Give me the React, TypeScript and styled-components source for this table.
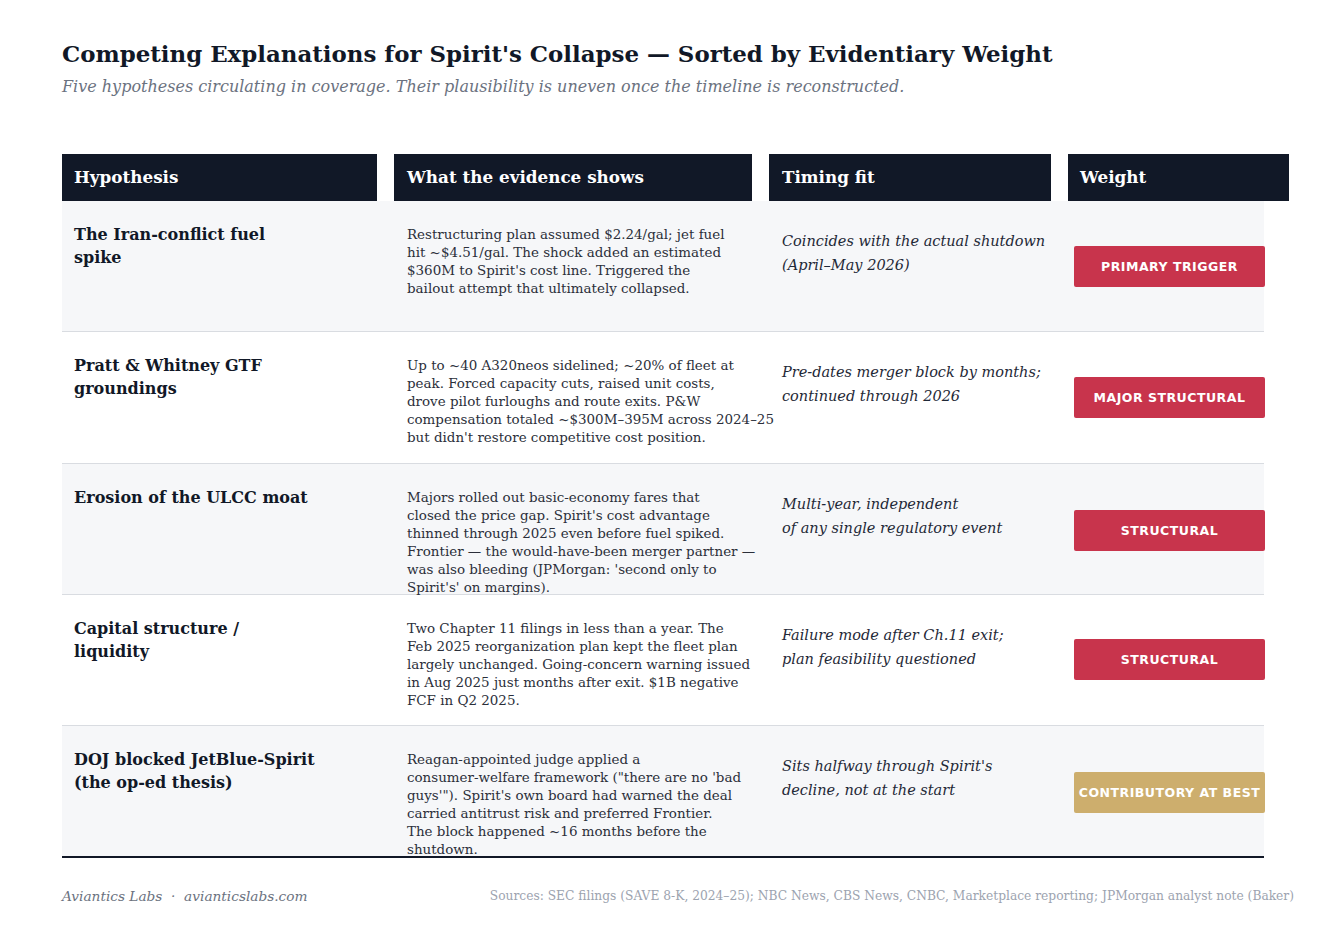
import React from "react";
import styled, { createGlobalStyle } from "styled-components";

const Global = createGlobalStyle`
  html, body { margin: 0; padding: 0; background: #ffffff; }
  body { font-family: "DejaVu Serif", serif; color: #111827; }
`;

const Page = styled.div`
  padding: 40px 0 0 62px;
  width: 1240px;
`;

const Title = styled.h1`
  margin: 0;
  font-size: 22.9px;
  line-height: 28px;
  font-weight: 700;
  color: #111827;
  white-space: nowrap;
`;

const Subtitle = styled.p`
  margin: 8px 0 0;
  font-size: 16px;
  line-height: 22px;
  font-style: italic;
  color: #6b7280;
`;

const HeaderRow = styled.div`
  margin-top: 56px;
  display: grid;
  grid-template-columns: 315px 358px 282px 221px;
  column-gap: 17px;
  width: 1227px;
`;

const HeaderCell = styled.div<{ $pad: number }>`
  background: #111827;
  color: #ffffff;
  height: 47px;
  display: flex;
  align-items: center;
  padding: 0 0 2px ${(p) => p.$pad}px;
  font-size: 16.8px;
  font-weight: 700;
  box-sizing: border-box;
`;

const Row = styled.div<{ $alt: boolean; $last: boolean }>`
  display: grid;
  grid-template-columns: 332px 375px 299px 196px;
  width: 1202px;
  height: ${(p) => (p.$last ? "132.25px" : "131.25px")};
  box-sizing: border-box;
  background: ${(p) => (p.$alt ? "#f6f7f9" : "#ffffff")};
  border-bottom: ${(p) => (p.$last ? "2px solid #111827" : "1px solid #d9dce1")};
`;

const Hypo = styled.div`
  padding: 22px 0 0 12px;
  font-size: 16px;
  line-height: 23px;
  font-weight: 700;
  color: #111827;
`;

const Evidence = styled.div`
  padding: 25px 0 0 13px;
  font-size: 13.45px;
  line-height: 18px;
  color: #2b2f3a;
`;

const Line = styled.div`
  white-space: nowrap;
`;

const Timing = styled.div`
  padding: 28px 8px 0 13px;
  font-size: 14.5px;
  line-height: 24px;
  font-style: italic;
  color: #1f2937;
`;

const WeightCell = styled.div`
  display: flex;
  align-items: center;
  padding-left: 6px;
`;

const Badge = styled.div<{ $tone: "red" | "gold" }>`
  flex: none;
  width: 191px;
  height: 41px;
  box-sizing: border-box;
  border-radius: 2px;
  display: flex;
  align-items: center;
  justify-content: center;
  background: ${(p) => (p.$tone === "red" ? "#c8344c" : "#cdae6d")};
  color: #ffffff;
  font-family: "DejaVu Sans", sans-serif;
  font-weight: 700;
  font-size: 12.5px;
  letter-spacing: 0.5px;
  text-transform: uppercase;
  white-space: nowrap;
`;

const Footer = styled.div`
  margin-top: 28px;
  width: 1232px;
  display: flex;
  justify-content: space-between;
  align-items: center;
`;

const Brand = styled.div`
  font-size: 13.7px;
  line-height: 20px;
  font-style: italic;
  color: #6b7280;
`;

const Sources = styled.div`
  font-size: 12.25px;
  line-height: 20px;
  color: #9ca3af;
  white-space: nowrap;
`;

type Item = {
  hypo: string[];
  evidence: string[];
  timing: string[];
  weight: string;
  tone: "red" | "gold";
};

const items: Item[] = [
  {
    hypo: ["The Iran-conflict fuel", "spike"],
    evidence: [
      "Restructuring plan assumed $2.24/gal; jet fuel",
      "hit ~$4.51/gal. The shock added an estimated",
      "$360M to Spirit's cost line. Triggered the",
      "bailout attempt that ultimately collapsed.",
    ],
    timing: ["Coincides with the actual shutdown", "(April–May 2026)"],
    weight: "Primary trigger",
    tone: "red",
  },
  {
    hypo: ["Pratt & Whitney GTF", "groundings"],
    evidence: [
      "Up to ~40 A320neos sidelined; ~20% of fleet at",
      "peak. Forced capacity cuts, raised unit costs,",
      "drove pilot furloughs and route exits. P&W",
      "compensation totaled ~$300M–395M across 2024–25",
      "but didn't restore competitive cost position.",
    ],
    timing: ["Pre-dates merger block by months;", "continued through 2026"],
    weight: "Major structural",
    tone: "red",
  },
  {
    hypo: ["Erosion of the ULCC moat"],
    evidence: [
      "Majors rolled out basic-economy fares that",
      "closed the price gap. Spirit's cost advantage",
      "thinned through 2025 even before fuel spiked.",
      "Frontier — the would-have-been merger partner —",
      "was also bleeding (JPMorgan: 'second only to",
      "Spirit's' on margins).",
    ],
    timing: ["Multi-year, independent", "of any single regulatory event"],
    weight: "Structural",
    tone: "red",
  },
  {
    hypo: ["Capital structure /", "liquidity"],
    evidence: [
      "Two Chapter 11 filings in less than a year. The",
      "Feb 2025 reorganization plan kept the fleet plan",
      "largely unchanged. Going-concern warning issued",
      "in Aug 2025 just months after exit. $1B negative",
      "FCF in Q2 2025.",
    ],
    timing: ["Failure mode after Ch.11 exit;", "plan feasibility questioned"],
    weight: "Structural",
    tone: "red",
  },
  {
    hypo: ["DOJ blocked JetBlue-Spirit", "(the op-ed thesis)"],
    evidence: [
      "Reagan-appointed judge applied a",
      "consumer-welfare framework (\"there are no 'bad",
      "guys'\"). Spirit's own board had warned the deal",
      "carried antitrust risk and preferred Frontier.",
      "The block happened ~16 months before the",
      "shutdown.",
    ],
    timing: ["Sits halfway through Spirit's", "decline, not at the start"],
    weight: "Contributory at best",
    tone: "gold",
  },
];

const headers: { label: string; pad: number }[] = [
  { label: "Hypothesis", pad: 12 },
  { label: "What the evidence shows", pad: 13 },
  { label: "Timing fit", pad: 13 },
  { label: "Weight", pad: 12 },
];

export default function App() {
  return (
    <>
      <Global />
      <Page>
        <Title>
          Competing Explanations for Spirit's Collapse — Sorted by Evidentiary Weight
        </Title>
        <Subtitle>
          Five hypotheses circulating in coverage. Their plausibility is uneven once the
          timeline is reconstructed.
        </Subtitle>
        <HeaderRow>
          {headers.map((h) => (
            <HeaderCell key={h.label} $pad={h.pad}>
              {h.label}
            </HeaderCell>
          ))}
        </HeaderRow>
        {items.map((it, i) => (
          <Row key={it.weight + i} $alt={i % 2 === 0} $last={i === items.length - 1}>
            <Hypo>
              {it.hypo.map((l) => (
                <Line key={l}>{l}</Line>
              ))}
            </Hypo>
            <Evidence>
              {it.evidence.map((l) => (
                <Line key={l}>{l}</Line>
              ))}
            </Evidence>
            <Timing>
              {it.timing.map((l) => (
                <Line key={l}>{l}</Line>
              ))}
            </Timing>
            <WeightCell>
              <Badge $tone={it.tone}>{it.weight}</Badge>
            </WeightCell>
          </Row>
        ))}
        <Footer>
          <Brand>Aviantics Labs &nbsp;·&nbsp; avianticslabs.com</Brand>
          <Sources>
            Sources: SEC filings (SAVE 8-K, 2024–25); NBC News, CBS News, CNBC, Marketplace
            reporting; JPMorgan analyst note (Baker)
          </Sources>
        </Footer>
      </Page>
    </>
  );
}
